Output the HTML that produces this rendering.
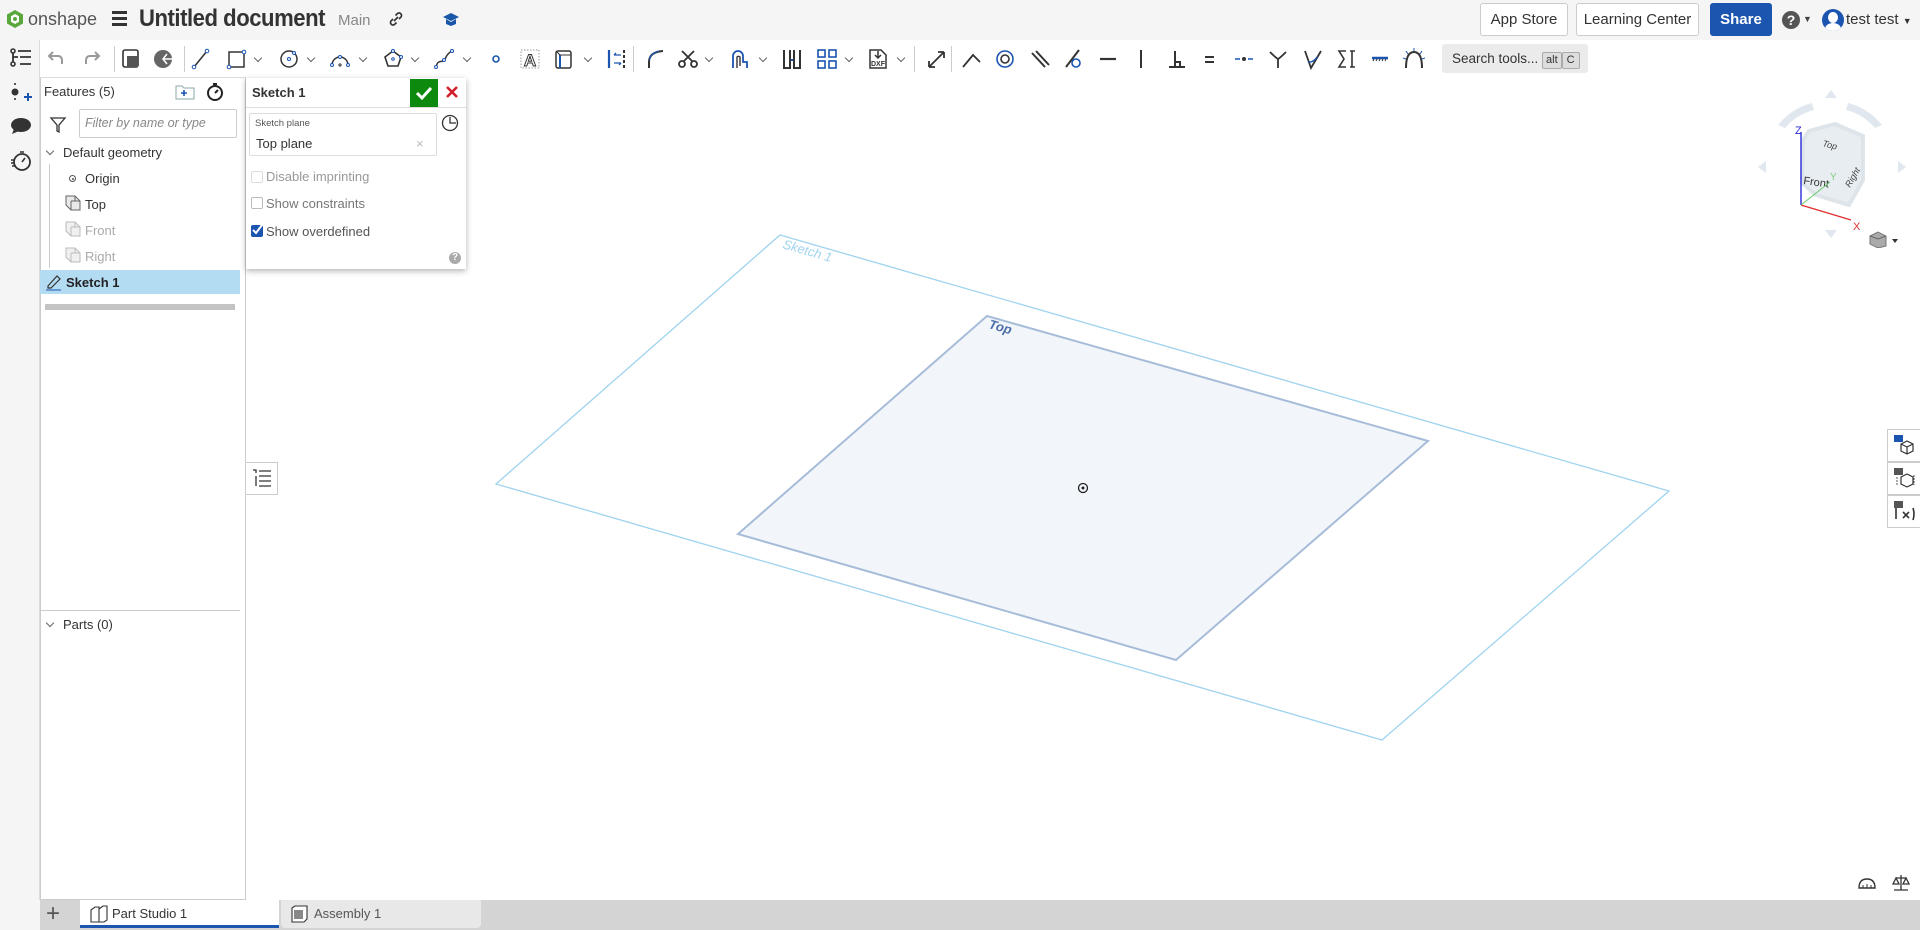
<!DOCTYPE html>
<html><head><meta charset="utf-8"><style>
*{box-sizing:border-box;margin:0;padding:0}
body{width:1920px;height:930px;overflow:hidden;background:#fff;font-family:"Liberation Sans",sans-serif;color:#333;position:relative}
.a{position:absolute}
.hdr{left:0;top:0;width:1920px;height:40px;background:#f5f5f5}
.tb{left:40px;top:40px;width:1880px;height:37px;background:#fff}
.rail{left:0;top:40px;width:40px;height:860px;background:#f5f5f5;border-right:1px solid #ddd}
.btn{top:3px;height:33px;border:1px solid #ccc;border-radius:3px;background:#fff;font-size:15px;line-height:31px;text-align:center;color:#333}
.sep{top:46px;width:1px;height:26px;background:#ccc}
.ic{top:48px}
.ch{top:55px;width:10px;height:8px}
.ch::before{content:"";position:absolute;left:1px;top:0;width:5px;height:5px;border-right:1.5px solid #666;border-bottom:1.5px solid #666;transform:rotate(45deg)}
.feat{left:40px;top:77px;width:206px;height:823px;border:1px solid #ccc;border-top:1px solid #ddd;background:#fff}
.t13{font-size:13px}
.dlg{left:246px;top:78px;width:220px;height:191px;background:#fff;box-shadow:0 2px 6px rgba(0,0,0,.3)}
.cb{width:12px;height:12px;border:1px solid #bbb;border-radius:2px;background:#fff}
.side{left:1887px;width:33px;height:33px;border:1px solid #ccc;border-right:none;background:#fff}
</style></head><body>
<div class="a hdr"></div>
<svg class="a" style="left:6px;top:9px" width="18" height="20" viewBox="0 0 18 20"><path d="M9 1 L17 5.5 V14.5 L9 19 L1 14.5 V5.5Z" fill="#5aa83c"/><path d="M9 5 L13 7.3 V12.7 L9 15 L5 12.7 V7.3Z" fill="#fff"/><circle cx="9" cy="10" r="2" fill="#5aa83c"/></svg>
<div class="a" style="left:28px;top:9px;font-size:18px;color:#555">onshape</div>
<div class="a" style="left:112px;top:11px;width:15px;height:3px;background:#333;box-shadow:0 6px 0 #333,0 12px 0 #333"></div>
<div class="a" style="left:139px;top:5px;font-size:24px;font-weight:bold;color:#333;letter-spacing:-0.5px;transform:scaleX(0.92);transform-origin:0 0;white-space:nowrap">Untitled document</div>
<div class="a" style="left:338px;top:12px;font-size:15px;color:#888">Main</div>
<svg class="a" style="left:388px;top:11px" width="16" height="16" viewBox="0 0 16 16"><path d="M6 10 L10 6 M5 8 L3 10 a2.5 2.5 0 0 0 3.5 3.5 L8.5 11.5 M11 8 L13 6 a2.5 2.5 0 0 0 -3.5 -3.5 L7.5 4.5" stroke="#333" stroke-width="1.7" fill="none"/></svg>
<svg class="a" style="left:442px;top:12px" width="18" height="16" viewBox="0 0 18 16"><path d="M1 5 L9 1 L17 5 L9 9Z M4 7 V12 L9 14 L14 12 V7 L9 10Z" fill="#1a56a8"/></svg>
<div class="a btn" style="left:1480px;width:88px">App Store</div>
<div class="a btn" style="left:1576px;width:123px">Learning Center</div>
<div class="a btn" style="left:1710px;width:62px;background:#1b55b0;border-color:#1b55b0;color:#fff;font-weight:bold">Share</div>
<div class="a" style="left:1782px;top:11px;width:18px;height:18px;border-radius:50%;background:#555;color:#fff;font-weight:bold;font-size:14px;text-align:center;line-height:18px">?</div>
<div class="a" style="left:1803px;top:14px;font-size:9px;color:#444">▼</div>
<div class="a" style="left:1822px;top:9px;width:22px;height:22px;border-radius:50%;background:#1b55b0;overflow:hidden"><div class="a" style="left:6px;top:3px;width:10px;height:11px;border-radius:50%;background:#fff"></div><div class="a" style="left:3px;top:14px;width:16px;height:12px;border-radius:50%;background:#fff"></div></div>
<div class="a" style="left:1846px;top:11px;font-size:15px;color:#333">test test <span style="font-size:9px">▼</span></div>

<div class="a tb"></div>
<div class="a rail"></div>
<svg class="a" style="left:10px;top:48px" width="22" height="20" viewBox="0 0 22 20"><circle cx="3" cy="3" r="2" fill="none" stroke="#333" stroke-width="1.6"/><circle cx="3" cy="16" r="2" fill="none" stroke="#333" stroke-width="1.6"/><path d="M3 5 V14 M3 9 H8 M8 3 H21 M10 9 H21 M10 16 H21" stroke="#333" stroke-width="1.8"/></svg>
<svg class="a" style="left:10px;top:83px" width="22" height="20" viewBox="0 0 22 20"><path d="M5 0 V3 M5 15 V18" stroke="#333" stroke-width="1.6" stroke-dasharray="2 2"/><circle cx="5" cy="9" r="3.5" fill="#333"/><path d="M14 14 H22 M18 10 V18" stroke="#1b55b0" stroke-width="2"/></svg>
<svg class="a" style="left:10px;top:117px" width="22" height="18" viewBox="0 0 22 18"><ellipse cx="11" cy="8" rx="10" ry="7" fill="#333"/><path d="M4 12 L2 17 L9 14Z" fill="#333"/></svg>
<svg class="a" style="left:10px;top:150px" width="22" height="22" viewBox="0 0 22 22"><circle cx="12" cy="12" r="8" fill="none" stroke="#333" stroke-width="1.8"/><path d="M10 2 H14 M12 12 L15 8 M1 10 H5 M1 13 H5 M2 16 H6" stroke="#333" stroke-width="1.6"/></svg>
<svg class="a" style="left:10px;top:904px" width="22" height="18" viewBox="0 0 22 18"><path d="M1 3 H15 V6 H1Z" fill="#333"/><circle cx="12" cy="10" r="5" fill="#fff" stroke="#333" stroke-width="2"/><path d="M15 13 L19 17" stroke="#333" stroke-width="2.4"/><path d="M1 6 H8 V13 H1Z" fill="#333"/></svg>

<svg class="a ic" style="left:47px" width="20" height="20" viewBox="0 0 20 20"><path d="M6 4 L2 8 L6 12 M2 8 H11 Q15 8 15 13 V16" stroke="#999" stroke-width="2" fill="none"/></svg>
<svg class="a ic" style="left:81px" width="20" height="20" viewBox="0 0 20 20"><path d="M14 4 L18 8 L14 12 M18 8 H9 Q5 8 5 13 V16" stroke="#999" stroke-width="2" fill="none"/></svg>
<div class="a sep" style="left:114px"></div>
<svg class="a ic" style="left:120px" width="22" height="22" viewBox="0 0 22 22"><rect x="3" y="2" width="15" height="17" rx="2" fill="#fff" stroke="#333" stroke-width="1.6"/><rect x="7" y="8" width="11" height="11" fill="#555"/></svg>
<svg class="a ic" style="left:153px" width="22" height="22" viewBox="0 0 22 22"><circle cx="10" cy="11" r="9" fill="#666"/><path d="M10 11 H21 M14 6 L10 11 L14 16" stroke="#fff" stroke-width="1.5" fill="none"/></svg>
<div class="a sep" style="left:184px"></div>
<svg class="a ic" style="left:191px" width="20" height="22" viewBox="0 0 20 22"><path d="M3 19 L16 3" stroke="#333" stroke-width="1.5"/><circle cx="3" cy="19" r="1.8" fill="#fff" stroke="#1b55b0"/><circle cx="16" cy="3" r="1.8" fill="#fff" stroke="#1b55b0"/></svg>
<svg class="a ic" style="left:226px" width="22" height="22" viewBox="0 0 22 22"><rect x="3" y="4" width="15" height="15" fill="none" stroke="#333" stroke-width="1.5"/><circle cx="3" cy="19" r="1.8" fill="#fff" stroke="#1b55b0"/><circle cx="18" cy="4" r="1.8" fill="#fff" stroke="#1b55b0"/></svg>
<div class="a ch" style="left:254px"></div>
<svg class="a ic" style="left:279px" width="22" height="22" viewBox="0 0 22 22"><circle cx="10" cy="11" r="8" fill="none" stroke="#333" stroke-width="1.5"/><circle cx="10" cy="11" r="1.5" fill="none" stroke="#1b55b0"/><circle cx="15" cy="5" r="1.5" fill="#fff" stroke="#1b55b0"/></svg>
<div class="a ch" style="left:307px"></div>
<svg class="a ic" style="left:329px" width="22" height="22" viewBox="0 0 22 22"><path d="M3 17 A8 8 0 0 1 19 17" fill="none" stroke="#333" stroke-width="1.5"/><circle cx="3" cy="17" r="1.5" fill="#fff" stroke="#1b55b0"/><circle cx="19" cy="17" r="1.5" fill="#fff" stroke="#1b55b0"/><circle cx="11" cy="9" r="1.5" fill="#fff" stroke="#1b55b0"/><path d="M9 17 H13 M11 15 V19" stroke="#333"/></svg>
<div class="a ch" style="left:359px"></div>
<svg class="a ic" style="left:382px" width="22" height="22" viewBox="0 0 22 22"><path d="M11 3 L19 9 L16 18 H6 L3 9Z" fill="none" stroke="#333" stroke-width="1.6"/><circle cx="11" cy="11" r="1.3" fill="none" stroke="#1b55b0"/><circle cx="11" cy="3" r="1.5" fill="#fff" stroke="#1b55b0"/><circle cx="19" cy="9" r="1.5" fill="#fff" stroke="#1b55b0"/></svg>
<div class="a ch" style="left:411px"></div>
<svg class="a ic" style="left:433px" width="22" height="22" viewBox="0 0 22 22"><path d="M3 19 C5 10 10 16 12 11 S17 4 19 3" fill="none" stroke="#333" stroke-width="1.5"/><circle cx="3" cy="19" r="1.5" fill="#fff" stroke="#1b55b0"/><circle cx="19" cy="3" r="1.5" fill="#fff" stroke="#1b55b0"/><circle cx="11" cy="12" r="1.5" fill="#fff" stroke="#1b55b0"/></svg>
<div class="a ch" style="left:463px"></div>
<svg class="a ic" style="left:488px" width="16" height="22" viewBox="0 0 16 22"><circle cx="8" cy="11" r="3" fill="none" stroke="#1b55b0" stroke-width="1.6"/></svg>
<svg class="a ic" style="left:519px" width="22" height="22" viewBox="0 0 22 22"><rect x="2" y="2" width="18" height="18" fill="none" stroke="#999" stroke-dasharray="1.5 1.5"/><text x="11" y="18" font-size="17" font-family="Liberation Sans" font-weight="bold" text-anchor="middle" fill="#fff" stroke="#333" stroke-width="1">A</text></svg>
<svg class="a ic" style="left:553px" width="22" height="22" viewBox="0 0 22 22"><rect x="3" y="3" width="15" height="17" rx="2" fill="none" stroke="#333" stroke-width="1.5"/><path d="M7 7 V20" stroke="#1b55b0" stroke-width="2"/><path d="M3 3 L7 7 H18" stroke="#333" fill="none"/></svg>
<div class="a ch" style="left:584px"></div>
<svg class="a ic" style="left:606px" width="22" height="22" viewBox="0 0 22 22"><path d="M3 2 V20" stroke="#1b55b0" stroke-width="2.2"/><path d="M18 2 V20" stroke="#333" stroke-width="2" stroke-dasharray="3 2"/><path d="M8 7 H15 M8 7 L10 5 M8 15 H15 M15 15 L13 17" stroke="#1b55b0" stroke-width="1.3" fill="none"/></svg>
<div class="a sep" style="left:633px"></div>
<svg class="a ic" style="left:645px" width="22" height="22" viewBox="0 0 22 22"><path d="M4 20 V14 Q4 4 18 3" stroke="#333" stroke-width="2" fill="none"/><path d="M4 12 Q6 5 14 3" stroke="#1b55b0" stroke-width="1.2" fill="none"/></svg>
<svg class="a ic" style="left:677px" width="22" height="22" viewBox="0 0 22 22"><circle cx="5" cy="16" r="3" fill="none" stroke="#333" stroke-width="1.8"/><circle cx="17" cy="16" r="3" fill="none" stroke="#333" stroke-width="1.8"/><path d="M6 14 L17 3 M16 14 L5 3" stroke="#333" stroke-width="1.8"/></svg>
<div class="a ch" style="left:705px"></div>
<svg class="a ic" style="left:728px" width="22" height="22" viewBox="0 0 22 22"><path d="M5 20 V8 A5 5 0 0 1 15 8 V14 H19 V20" stroke="#1b55b0" stroke-width="1.8" fill="none"/><path d="M9 20 V9 A2 2 0 0 1 12 9 V18" stroke="#333" stroke-width="1.4" fill="none"/></svg>
<div class="a ch" style="left:759px"></div>
<svg class="a ic" style="left:781px" width="22" height="22" viewBox="0 0 22 22"><path d="M3 2 V20 H9 V2 M13 2 V20 H19 V2" stroke="#333" stroke-width="2" fill="none"/><path d="M10 12 H12" stroke="#1b55b0" stroke-width="2"/></svg>
<svg class="a ic" style="left:816px" width="22" height="22" viewBox="0 0 22 22"><rect x="2" y="2" width="7" height="7" fill="none" stroke="#1b55b0" stroke-width="1.6"/><rect x="13" y="2" width="7" height="7" fill="none" stroke="#1b55b0" stroke-width="1.6"/><rect x="2" y="13" width="7" height="7" fill="none" stroke="#1b55b0" stroke-width="1.6"/><rect x="13" y="13" width="7" height="7" fill="none" stroke="#1b55b0" stroke-width="1.6"/></svg>
<div class="a ch" style="left:845px"></div>
<svg class="a ic" style="left:867px" width="22" height="22" viewBox="0 0 22 22"><path d="M3 2 H14 L19 7 V20 H3Z" fill="none" stroke="#333" stroke-width="1.5"/><text x="11" y="18" font-size="7" font-family="Liberation Sans" font-weight="bold" text-anchor="middle" fill="#333">DXF</text><path d="M11 3 V10 M8 7 L11 10 L14 7" stroke="#333" stroke-width="1.5" fill="none"/></svg>
<div class="a ch" style="left:897px"></div>
<div class="a sep" style="left:914px"></div>
<svg class="a ic" style="left:925px" width="22" height="22" viewBox="0 0 22 22"><path d="M4 19 L19 4 M4 19 V13 M4 19 H10 M19 4 V10 M19 4 H13" stroke="#333" stroke-width="1.8" fill="none"/></svg>
<div class="a sep" style="left:951px"></div>
<svg class="a ic" style="left:961px" width="22" height="22" viewBox="0 0 22 22"><path d="M2 19 L12 7 L19 14" stroke="#333" stroke-width="1.8" fill="none"/></svg>
<svg class="a ic" style="left:994px" width="22" height="22" viewBox="0 0 22 22"><circle cx="11" cy="11" r="8" fill="none" stroke="#1b55b0" stroke-width="1.6"/><circle cx="11" cy="11" r="4" fill="none" stroke="#333" stroke-width="1.6"/></svg>
<svg class="a ic" style="left:1029px" width="22" height="22" viewBox="0 0 22 22"><path d="M3 5 L16 19 M7 3 L20 17" stroke="#333" stroke-width="2"/></svg>
<svg class="a ic" style="left:1063px" width="22" height="22" viewBox="0 0 22 22"><path d="M3 19 L16 2" stroke="#333" stroke-width="2"/><circle cx="13" cy="15" r="4" fill="none" stroke="#1b55b0" stroke-width="1.6"/></svg>
<svg class="a ic" style="left:1097px" width="22" height="22" viewBox="0 0 22 22"><path d="M3 11 H19" stroke="#333" stroke-width="2.2"/></svg>
<svg class="a ic" style="left:1130px" width="22" height="22" viewBox="0 0 22 22"><path d="M11 2 V20" stroke="#333" stroke-width="2"/></svg>
<svg class="a ic" style="left:1166px" width="22" height="22" viewBox="0 0 22 22"><path d="M3 19 H19 M9 19 V3 M9 14 H14 V19" stroke="#333" stroke-width="2" fill="none"/></svg>
<svg class="a ic" style="left:1199px" width="22" height="22" viewBox="0 0 22 22"><path d="M6 9 H15 M6 14 H15" stroke="#333" stroke-width="2"/></svg>
<svg class="a ic" style="left:1233px" width="22" height="22" viewBox="0 0 22 22"><path d="M2 11 H7 M15 11 H20" stroke="#1b55b0" stroke-width="1.6"/><circle cx="11" cy="11" r="2" fill="#333"/></svg>
<svg class="a ic" style="left:1267px" width="22" height="22" viewBox="0 0 22 22"><path d="M3 4 Q9 10 11 11 Q13 10 19 4 M11 11 V20" stroke="#333" stroke-width="1.8" fill="none"/></svg>
<svg class="a ic" style="left:1302px" width="22" height="22" viewBox="0 0 22 22"><path d="M3 3 L9 20 L19 3" stroke="#333" stroke-width="1.8" fill="none"/><path d="M6 14 Q11 15 15 9" stroke="#1b55b0" stroke-width="1.4" fill="none"/></svg>
<svg class="a ic" style="left:1336px" width="22" height="22" viewBox="0 0 22 22"><path d="M10 3 H3 L8 11 L3 19 H10 M14 3 H19 M14 19 H19 M16 3 V19" stroke="#333" stroke-width="1.6" fill="none"/></svg>
<svg class="a ic" style="left:1369px" width="22" height="22" viewBox="0 0 22 22"><path d="M3 10 H19" stroke="#1b55b0" stroke-width="2.5"/><path d="M4 13 L5 11 M7 13 L8 11 M10 13 L11 11 M13 13 L14 11 M16 13 L17 11" stroke="#333"/></svg>
<svg class="a ic" style="left:1403px" width="22" height="22" viewBox="0 0 22 22"><path d="M3 20 Q3 4 11 4 Q19 4 19 20" stroke="#333" stroke-width="2" fill="none"/><path d="M5 6 L3 3 M11 3 V0 M17 6 L19 3 M3 11 L0 10 M19 11 L22 10" stroke="#1b55b0"/></svg>
<div class="a" style="left:1442px;top:44px;width:146px;height:29px;background:#ebebeb;border-radius:3px;font-size:13.5px;line-height:29px;padding-left:10px;color:#333">Search tools... <span style="display:inline-block;border:1px solid #aaa;background:#ddd;font-size:11px;line-height:15px;padding:0 3px;border-radius:2px">alt</span><span style="display:inline-block;border:1px solid #aaa;background:#ddd;font-size:11px;line-height:15px;padding:0 4px;border-radius:2px">C</span></div>

<div class="a feat"></div>
<div class="a t13" style="left:44px;top:84px;color:#333">Features (5)</div>
<svg class="a" style="left:175px;top:84px" width="20" height="16" viewBox="0 0 20 16"><path d="M1 2 H7 L9 4 H19 V15 H1Z" fill="none" stroke="#8aa" stroke-width="1"/><path d="M6 9 H12 M9 6 V12" stroke="#1b55b0" stroke-width="1.6"/></svg>
<svg class="a" style="left:205px;top:82px" width="20" height="20" viewBox="0 0 20 20"><circle cx="10" cy="11" r="7" fill="none" stroke="#222" stroke-width="2"/><path d="M8 2 H12 M10 11 L13 8" stroke="#222" stroke-width="2"/></svg>
<svg class="a" style="left:49px;top:116px" width="18" height="18" viewBox="0 0 18 18"><path d="M2 2 H16 L10 9 V16 L8 15 V9Z" fill="none" stroke="#333" stroke-width="1.3"/></svg>
<div class="a" style="left:79px;top:109px;width:158px;height:29px;border:1px solid #ccc;border-radius:2px;font-size:12.5px;font-style:italic;color:#888;line-height:27px;padding-left:5px">Filter by name or type</div>
<div class="a ch" style="left:46px;top:148px"></div>
<div class="a t13" style="left:63px;top:145px;color:#333">Default geometry</div>
<div class="a" style="left:49px;top:164px;width:1px;height:104px;background:#ccc"></div>
<div class="a" style="left:69px;top:175px;width:7px;height:7px;border:1px solid #555;border-radius:50%"><div class="a" style="left:1.5px;top:1.5px;width:2px;height:2px;background:#555;border-radius:50%"></div></div>
<div class="a t13" style="left:85px;top:171px;color:#333">Origin</div>
<svg class="a" style="left:65px;top:195px" width="16" height="16" viewBox="0 0 16 16"><path d="M1 1 H10 L15 6 V15 H6 L1 10Z M1 1 V10 M6 6 V15 M6 6 H15 M10 1 V6" fill="#e8e8e8" stroke="#666" stroke-width="1"/></svg>
<div class="a t13" style="left:85px;top:197px;color:#333">Top</div>
<svg class="a" style="left:65px;top:221px" width="16" height="16" viewBox="0 0 16 16"><path d="M1 1 H10 L15 6 V15 H6 L1 10Z M1 1 V10 M6 6 V15 M6 6 H15 M10 1 V6" fill="#f0f0f0" stroke="#bbb" stroke-width="1"/></svg>
<div class="a t13" style="left:85px;top:223px;color:#aaa">Front</div>
<svg class="a" style="left:65px;top:247px" width="16" height="16" viewBox="0 0 16 16"><path d="M1 1 H10 L15 6 V15 H6 L1 10Z M1 1 V10 M6 6 V15 M6 6 H15 M10 1 V6" fill="#f0f0f0" stroke="#bbb" stroke-width="1"/></svg>
<div class="a t13" style="left:85px;top:249px;color:#aaa">Right</div>
<div class="a" style="left:40px;top:270px;width:200px;height:24px;background:#b3dcf3"></div>
<svg class="a" style="left:45px;top:273px" width="18" height="18" viewBox="0 0 18 18"><path d="M3 13 L12 3 L15 6 L6 15 L3 15Z" fill="none" stroke="#333" stroke-width="1.2"/><path d="M1 17 H16" stroke="#1b55b0"/></svg>
<div class="a t13" style="left:66px;top:275px;color:#222;font-weight:bold">Sketch 1</div>
<div class="a" style="left:45px;top:304px;width:190px;height:6px;background:#c4c4c4"></div>
<div class="a" style="left:40px;top:610px;width:200px;height:1px;background:#ccc"></div>
<div class="a ch" style="left:46px;top:620px"></div>
<div class="a t13" style="left:63px;top:617px;color:#333">Parts (0)</div>

<div class="a dlg"></div>
<div class="a" style="left:252px;top:85px;font-size:13px;font-weight:bold;color:#333">Sketch 1</div>
<div class="a" style="left:410px;top:79px;width:28px;height:28px;background:#0d8a0d"></div>
<svg class="a" style="left:414px;top:83px" width="20" height="20" viewBox="0 0 20 20"><path d="M3 10 L8 15 L17 5" stroke="#fff" stroke-width="3" fill="none"/></svg>
<svg class="a" style="left:445px;top:85px" width="14" height="14" viewBox="0 0 14 14"><path d="M2 2 L12 12 M12 2 L2 12" stroke="#d0202a" stroke-width="2.6"/></svg>
<div class="a" style="left:246px;top:107px;width:220px;height:1px;background:#ddd"></div>
<div class="a" style="left:249px;top:113px;width:188px;height:43px;border:1px solid #ddd;border-radius:2px"></div>
<div class="a" style="left:255px;top:118px;font-size:9.5px;color:#555">Sketch plane</div>
<div class="a" style="left:256px;top:136px;font-size:13px;color:#333">Top plane</div>
<div class="a" style="left:416px;top:136px;font-size:13px;color:#bbb">×</div>
<svg class="a" style="left:441px;top:114px" width="18" height="18" viewBox="0 0 18 18"><circle cx="9" cy="9" r="7.5" fill="none" stroke="#333" stroke-width="1.3"/><path d="M9 3 V9 H15" stroke="#333" stroke-width="1.3" fill="none"/></svg>
<div class="a cb" style="left:251px;top:171px;border-color:#ddd"></div>
<div class="a t13" style="left:266px;top:169px;color:#999">Disable imprinting</div>
<div class="a cb" style="left:251px;top:197px"></div>
<div class="a t13" style="left:266px;top:196px;color:#777">Show constraints</div>
<div class="a cb" style="left:251px;top:225px;background:#1b55b0;border-color:#1b55b0"></div>
<svg class="a" style="left:251px;top:223px" width="13" height="13" viewBox="0 0 13 13"><path d="M2 7 L5 10 L11 2" stroke="#fff" stroke-width="2" fill="none"/></svg>
<div class="a t13" style="left:266px;top:224px;color:#555">Show overdefined</div>
<div class="a" style="left:449px;top:252px;width:12px;height:12px;border-radius:50%;background:#aaa;color:#fff;font-size:10px;font-weight:bold;text-align:center;line-height:12px">?</div>

<div class="a" style="left:246px;top:462px;width:32px;height:33px;border:1px solid #ccc;border-left:none;background:#fff"></div>
<svg class="a" style="left:252px;top:469px" width="20" height="18" viewBox="0 0 20 18"><path d="M1 1 H4 V4 M7 2 H19 M7 7 H19 M7 12 H19 M7 17 H19 M4 7 V17" stroke="#333" stroke-width="1.3" fill="none"/></svg>

<svg class="a" style="left:0;top:0" width="1920" height="930" viewBox="0 0 1920 930">
<polygon points="780,235 1669,491 1382,740 496,484" fill="none" stroke="#9fd3ef" stroke-width="1.3"/>
<text x="782" y="248" font-size="13" font-family="Liberation Sans" font-style="italic" fill="#9fd3ef" transform="rotate(16 782 248)">Sketch 1</text>
<polygon points="987,316 1428,441 1176,660 738,534" fill="#f2f6fa" stroke="#a6bcd8" stroke-width="2"/>
<text x="988" y="328" font-size="13" font-family="Liberation Sans" font-style="italic" font-weight="bold" fill="#4d6fa8" transform="rotate(16 988 328)">Top</text>
<circle cx="1083" cy="488" r="4.5" fill="none" stroke="#222" stroke-width="1.3"/><circle cx="1083" cy="488" r="1.5" fill="#222"/>
</svg>

<svg class="a" style="left:1752px;top:88px" width="168" height="160" viewBox="0 0 168 160">
<g fill="#e0e7ee"><path d="M79 2 L85 10 H73Z"/><path d="M79 150 L85 142 H73Z"/><path d="M6 79 L14 73 V85Z"/><path d="M154 79 L146 73 V85Z"/>
<path d="M26 37 Q40 20 60 15 L62 22 Q45 26 33 40Z"/><path d="M130 37 Q116 20 96 15 L94 22 Q111 26 123 40Z"/></g>
<path d="M57 43 L83 36 L111 48 L111 92 L97 117 L64 107 L50 95 L51 52Z" fill="#e8edf2" stroke="#dde4ea" stroke-width="4"/>
<text x="70" y="58" font-size="9" font-family="Liberation Sans" font-style="italic" fill="#444" transform="rotate(15 70 58)">Top</text>
<text x="51" y="96" font-size="11" font-family="Liberation Sans" fill="#333" transform="rotate(8 51 96)">Front</text>
<text x="98" y="100" font-size="9" font-family="Liberation Sans" font-style="italic" fill="#444" transform="rotate(-60 98 100)">Right</text>
<path d="M49 117 V44" stroke="#2a2ad8" stroke-width="1.4"/><text x="43" y="46" font-size="11" fill="#2a2ad8" font-family="Liberation Sans">Z</text>
<path d="M49 117 L99 132" stroke="#e03030" stroke-width="1.4"/><text x="101" y="142" font-size="11" fill="#e03030" font-family="Liberation Sans">X</text>
<path d="M49 117 L78 94" stroke="#6c6" stroke-width="1"/><text x="78" y="92" font-size="10" fill="#8c8" font-family="Liberation Sans">Y</text>
<path d="M118 148 L126 144 L134 148 V158 L126 160 L118 156Z" fill="#aaa" stroke="#777"/><path d="M118 148 L126 151 L134 148" stroke="#666" fill="none"/>
<path d="M140 151 H146 L143 155Z" fill="#333"/>
</svg>

<div class="a side" style="top:429px"></div><div class="a side" style="top:462px"></div><div class="a side" style="top:495px"></div>
<svg class="a" style="left:1893px;top:434px" width="22" height="22" viewBox="0 0 22 22"><rect x="1" y="1" width="9" height="7" fill="#1b55b0"/><path d="M8 10 L14 7 L20 10 V17 L14 20 L8 17Z M8 10 L14 13 L20 10 M14 13 V20" fill="none" stroke="#333" stroke-width="1.2"/></svg>
<svg class="a" style="left:1893px;top:467px" width="22" height="22" viewBox="0 0 22 22"><rect x="1" y="1" width="9" height="7" fill="#555"/><path d="M8 10 L14 7 L20 10 V17 L14 20 L8 17Z" fill="none" stroke="#333" stroke-width="1.2"/><path d="M4 10 V18 M21 8 V18" stroke="#555" stroke-dasharray="2 1"/></svg>
<svg class="a" style="left:1893px;top:500px" width="22" height="22" viewBox="0 0 22 22"><rect x="1" y="1" width="9" height="7" fill="#555"/><path d="M3 8 V19 M20 8 Q22 14 20 20 M10 12 L16 18 M16 12 L10 18" fill="none" stroke="#333" stroke-width="1.6"/></svg>

<svg class="a" style="left:1858px;top:876px" width="18" height="16" viewBox="0 0 18 16"><path d="M1 12 Q1 3 9 3 Q17 3 17 12Z" fill="none" stroke="#333" stroke-width="1.4"/><path d="M1 12 H17 M5 12 V9 M9 12 V8 M13 12 V9" stroke="#333"/></svg>
<svg class="a" style="left:1892px;top:874px" width="18" height="18" viewBox="0 0 18 18"><path d="M9 1 V16 M4 4 H14 M2 16 H16 M4 4 L1 10 H7Z M14 4 L11 10 H17Z" fill="none" stroke="#333" stroke-width="1.3"/></svg>

<div class="a" style="left:40px;top:900px;width:1880px;height:30px;background:#d4d4d4"></div>
<div class="a" style="left:0;top:900px;width:40px;height:30px;background:#f5f5f5"></div>
<div class="a" style="left:46px;top:902px;font-size:24px;color:#555;line-height:24px">+</div>
<div class="a" style="left:80px;top:900px;width:199px;height:28px;background:#fff;border-bottom:3px solid #1b55b0"></div>
<svg class="a" style="left:90px;top:905px" width="18" height="18" viewBox="0 0 18 18"><path d="M1 5 L5 2 H9 V17 H1Z M9 4 L13 1 H17 V15 L14 17 H9" fill="#fff" stroke="#333" stroke-width="1.1"/></svg>
<div class="a t13" style="left:112px;top:906px;color:#333">Part Studio 1</div>
<div class="a" style="left:281px;top:900px;width:200px;height:28px;background:#e8e8e8;border-radius:0 0 4px 4px"></div>
<svg class="a" style="left:291px;top:905px" width="18" height="18" viewBox="0 0 18 18"><path d="M1 3 L4 1 H16 V14 L13 17 H1Z" fill="#fff" stroke="#333" stroke-width="1.1"/><rect x="3" y="5" width="9" height="9" fill="#888"/></svg>
<div class="a t13" style="left:314px;top:906px;color:#555">Assembly 1</div>
</body></html>
